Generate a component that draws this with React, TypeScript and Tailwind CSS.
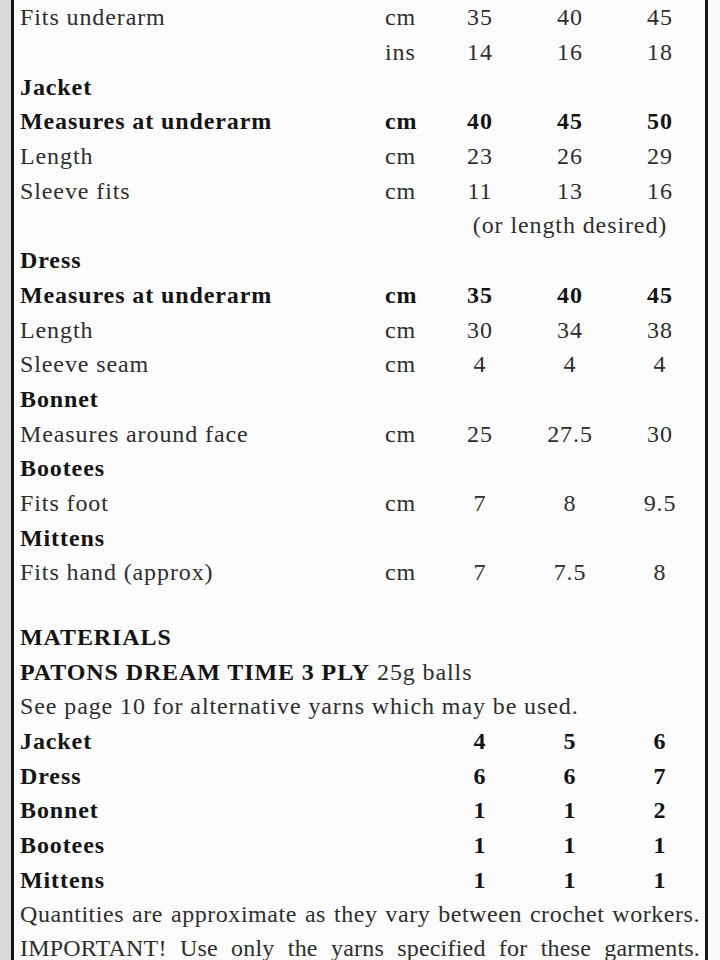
import React from "react";

type Row =
    | { kind: "head"; label: string }
    | { kind: "data"; label: string; unit?: string; v: [string, string, string]; bold?: boolean }
    | { kind: "note"; text: string };

const sizes: Row[] = [
    { kind: "data", label: "Fits underarm", unit: "cm", v: ["35", "40", "45"] },
    { kind: "data", label: "", unit: "ins", v: ["14", "16", "18"] },
    { kind: "head", label: "Jacket" },
    { kind: "data", label: "Measures at underarm", unit: "cm", v: ["40", "45", "50"], bold: true },
    { kind: "data", label: "Length", unit: "cm", v: ["23", "26", "29"] },
    { kind: "data", label: "Sleeve fits", unit: "cm", v: ["11", "13", "16"] },
    { kind: "note", text: "(or length desired)" },
    { kind: "head", label: "Dress" },
    { kind: "data", label: "Measures at underarm", unit: "cm", v: ["35", "40", "45"], bold: true },
    { kind: "data", label: "Length", unit: "cm", v: ["30", "34", "38"] },
    { kind: "data", label: "Sleeve seam", unit: "cm", v: ["4", "4", "4"] },
    { kind: "head", label: "Bonnet" },
    { kind: "data", label: "Measures around face", unit: "cm", v: ["25", "27.5", "30"] },
    { kind: "head", label: "Bootees" },
    { kind: "data", label: "Fits foot", unit: "cm", v: ["7", "8", "9.5"] },
    { kind: "head", label: "Mittens" },
    { kind: "data", label: "Fits hand (approx)", unit: "cm", v: ["7", "7.5", "8"] },
];

const balls: [string, [string, string, string]][] = [
    ["Jacket", ["4", "5", "6"]],
    ["Dress", ["6", "6", "7"]],
    ["Bonnet", ["1", "1", "2"]],
    ["Bootees", ["1", "1", "1"]],
    ["Mittens", ["1", "1", "1"]],
];

const grid = "grid grid-cols-[365px_50px_90px_90px_90px] items-center h-[34.7px]";

function SizeRow({ row }: { row: Row }) {
    if (row.kind === "head") {
        return (
            <div className={grid}>
                <span className="font-bold text-[#141414]">{row.label}</span>
            </div>
        );
    }
    if (row.kind === "note") {
        return (
            <div className={grid}>
                <span className="col-start-3 col-span-3 text-center">{row.text}</span>
            </div>
        );
    }
    const b = row.bold ? "font-bold text-[#141414]" : "";
    return (
        <div className={grid}>
            <span className={b}>{row.label}</span>
            <span className={b}>{row.unit}</span>
            {row.v.map((n, i) => (
                <span key={i} className={"text-center " + b}>{n}</span>
            ))}
        </div>
    );
}

export default function App() {
    return (
        <div className="flex h-[960px] w-[720px] overflow-hidden bg-[#fcfcfc] text-[24px] leading-none tracking-[0.9px] text-[#2e2e2e] font-['Liberation_Serif',serif]">
            <div className="w-[11px] shrink-0 bg-[#d9d9d9]" />
            <div className="w-[3px] shrink-0 bg-[#161616]" />
            <div className="flex-1 pl-[6px]">
                {sizes.map((r, i) => (
                    <SizeRow key={i} row={r} />
                ))}
                <div className="h-[30px]" />
                <div className={grid}>
                    <span className="col-span-5 font-bold text-[#141414]">MATERIALS</span>
                </div>
                <div className={grid}>
                    <span className="col-span-5">
                        <b className="text-[#141414]">PATONS DREAM TIME 3 PLY</b> 25g balls
                    </span>
                </div>
                <div className={grid}>
                    <span className="col-span-5">See page 10 for alternative yarns which may be used.</span>
                </div>
                {balls.map(([name, v]) => (
                    <div key={name} className={grid + " font-bold text-[#141414]"}>
                        <span>{name}</span>
                        <span />
                        {v.map((n, i) => (
                            <span key={i} className="text-center">{n}</span>
                        ))}
                    </div>
                ))}
                <div className="flex h-[34.5px] items-center pr-[5px]">
                    <p className="w-full whitespace-nowrap tracking-[0.55px] text-justify [text-align-last:justify]">
                        Quantities are approximate as they vary between crochet workers.
                    </p>
                </div>
                <div className="flex h-[32px] items-center pr-[5px]">
                    <p className="w-full text-justify tracking-[0.2px] [text-align-last:justify]">
                        IMPORTANT! Use only the yarns specified for these garments.
                    </p>
                </div>
            </div>
            <div className="w-[3px] shrink-0 bg-[#161616]" />
            <div className="w-[12px] shrink-0 bg-[#fafafa]" />
        </div>
    );
}
